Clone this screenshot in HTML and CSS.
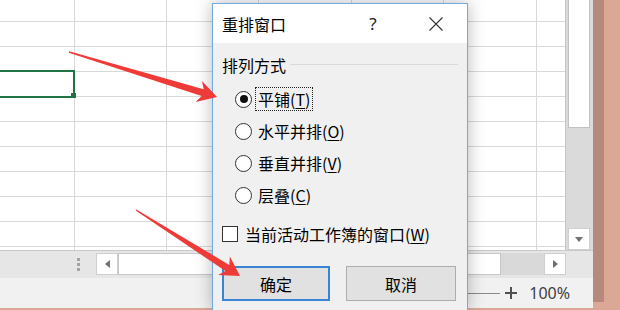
FILE: index.html
```html
<!DOCTYPE html>
<html lang="zh-CN">
<head>
<meta charset="utf-8">
<title>重排窗口</title>
<link rel="stylesheet" href="styles.css">
</head>
<body>
<div class="app">
  <div class="excel">
    <div class="top">
      <div class="grid">
        <div class="col w75"></div>
        <div class="col w92"></div>
        <div class="col w92"></div>
        <div class="col w93"></div>
        <div class="col w92"></div>
        <div class="col w93"></div>
        <div class="col last"></div>
        <div class="sel"><span class="handle"></span></div>
      </div>
      <div class="vscroll">
        <div class="vthumb"></div>
        <div class="vtrack"></div>
        <div class="sbtn down"><span class="tri-down"></span></div>
      </div>
    </div>
    <div class="hscroll">
      <div class="dots"><span></span><span></span><span></span></div>
      <div class="sbtn"><span class="tri-left"></span></div>
      <div class="hthumb"></div>
      <div class="htrack"></div>
      <div class="sbtn"><span class="tri-right"></span></div>
    </div>
    <div class="status">
      <span class="zoomline"></span>
      <svg class="plus" width="12" height="12" viewBox="0 0 12 12"><path d="M6 0v12M0 6h12" stroke="#505050" stroke-width="2" fill="none"/></svg>
      <span class="pct">100%</span>
    </div>
  </div>
  <div class="side"><div class="brown"></div></div>
</div>

<div class="dialog">
  <div class="titlebar">
    <span class="title">重排窗口</span>
    <span class="help">?</span>
    <span class="close"><svg width="14" height="14" viewBox="0 0 14 14"><path d="M0.5 0.5L13.5 13.5M13.5 0.5L0.5 13.5" stroke="#333" stroke-width="1.1" fill="none"/></svg></span>
  </div>
  <div class="body">
    <div class="group-head"><span>排列方式</span><span class="rule"></span></div>
    <div class="options">
      <div class="opt"><span class="radio checked"></span><span class="lbl focus">平铺(<u>T</u>)</span></div>
      <div class="opt"><span class="radio"></span><span class="lbl">水平并排(<u>O</u>)</span></div>
      <div class="opt"><span class="radio"></span><span class="lbl">垂直并排(<u>V</u>)</span></div>
      <div class="opt"><span class="radio"></span><span class="lbl">层叠(<u>C</u>)</span></div>
    </div>
    <div class="check"><span class="box"></span><span>当前活动工作簿的窗口(<u>W</u>)</span></div>
    <div class="buttons">
      <span class="btn default">确定</span>
      <span class="btn cancel">取消</span>
    </div>
  </div>
</div>

<svg class="arrows" width="620" height="310" viewBox="0 0 620 310">
  <g transform="translate(69 52) rotate(16.9)">
    <polygon points="0,-0.7 139.7,-3.5 135.7,-11 154.7,0 135.7,11 139.7,3.5 0,0.7" fill="#ef3b38"/>
  </g>
  <g transform="translate(136 210) rotate(32.4)">
    <polygon points="0,-0.7 108.2,-3.6 104.2,-11 123.2,0 104.2,11 108.2,3.6 0,0.7" fill="#ef3b38"/>
  </g>
</svg>
</body>
</html>
```
FILE: styles.css
```css
* { box-sizing: border-box; }
html, body { margin: 0; padding: 0; }
body {
  width: 620px;
  height: 310px;
  overflow: hidden;
  position: relative;
  background: #dca896;
  font-family: "Noto Sans CJK SC", "Noto Sans", sans-serif;
}

.app { display: flex; height: 310px; }

.excel {
  width: 593px;
  height: 308px;
  display: flex;
  flex-direction: column;
  background: #f1f1f1;
}

.top { display: flex; height: 250px; }

.grid {
  position: relative;
  display: flex;
  width: 566px;
  height: 250px;
  border-right: 1px solid #c6c6c6;
  background-color: #fff;
  background-image: linear-gradient(to bottom, transparent 21px, #d9d9d9 21px, #d9d9d9 22px, transparent 22px);
  background-size: 100% 25px;
}
.col { height: 100%; border-right: 1px solid #d9d9d9; flex: none; }
.w75 { width: 75px; }
.w92 { width: 92px; }
.w93 { width: 93px; }
.col.last { flex: 1; border-right: none; }

.sel {
  position: absolute;
  left: -2px;
  top: 70px;
  width: 77px;
  height: 28px;
  border: 2px solid #217346;
}
.handle {
  position: absolute;
  right: -3px;
  bottom: -2px;
  width: 5px;
  height: 5px;
  background: #217346;
}

.vscroll {
  width: 27px;
  height: 250px;
  background: #dadada;
  display: flex;
  flex-direction: column;
  padding-left: 2px;
}
.vthumb {
  width: 22px;
  height: 130px;
  margin-top: -2px;
  background: #fff;
  border: 1px solid #c2c2c2;
}
.vtrack { flex: 1; }

.sbtn {
  width: 22px;
  height: 22px;
  flex: none;
  background: #fff;
  border: 1px solid #cfcfcf;
  display: flex;
  align-items: center;
  justify-content: center;
}
.tri-down { width: 0; height: 0; border-left: 4px solid transparent; border-right: 4px solid transparent; border-top: 5px solid #707070; }
.tri-left { width: 0; height: 0; border-top: 4px solid transparent; border-bottom: 4px solid transparent; border-right: 5px solid #707070; }
.tri-right { width: 0; height: 0; border-top: 4px solid transparent; border-bottom: 4px solid transparent; border-left: 5px solid #707070; }

.hscroll {
  height: 28px;
  border-top: 1px solid #c8c8c8;
  background: #e6e6e6;
  display: flex;
  align-items: flex-start;
  padding-top: 2px;
  padding-right: 27px;
}
.dots {
  display: flex;
  flex-direction: column;
  gap: 2px;
  margin: 5px 16px 0 77px;
}
.dots span { width: 3px; height: 3px; background: #a3a3a3; }
.hthumb {
  width: 383px;
  height: 22px;
  background: #fff;
  border: 1px solid #c8c8c8;
}
.htrack { flex: 1; height: 22px; background: #d9d9d9; }

.status {
  height: 30px;
  display: flex;
  align-items: center;
  justify-content: flex-end;
  padding-right: 23px;
}
.zoomline { width: 150px; height: 1px; background: #8a8a8a; margin-right: 5px; }
.plus { margin-right: 12px; }
.pct { font-family: "Noto Sans", sans-serif; font-size: 16px; color: #404040; line-height: 20px; }

.side { width: 27px; }
.brown { width: 11px; height: 302px; background: #b7897a; }

/* dialog */
.dialog {
  position: absolute;
  left: 212px;
  top: 3px;
  width: 256px;
  height: 308px;
  border: 1px solid #72a9e0;
  border-bottom: none;
  background: #f0f0f0;
  box-shadow: 0 0 16px rgba(0, 0, 0, 0.28);
  color: #000;
}
.titlebar {
  height: 39px;
  background: #fff;
  display: flex;
  align-items: center;
  padding: 0 8px 0 9px;
}
.title { flex: 1; font-size: 16px; line-height: 20px; }
.help {
  width: 30px;
  text-align: center;
  font-family: "Noto Sans", sans-serif;
  font-size: 17px;
  color: #222;
  line-height: 20px;
}
.close {
  width: 46px;
  margin-left: 25px;
  display: flex;
  justify-content: center;
  align-items: center;
}
.close svg { display: block; }

.body { padding: 0 9px; font-size: 16px; }
.group-head {
  margin-top: 10px;
  height: 24px;
  display: flex;
  align-items: center;
  line-height: 20px;
}
.rule { flex: 1; height: 1px; background: #dadada; margin-left: 4px; margin-top: -1px; }

.options { margin-top: 6px; }
.opt {
  height: 32px;
  display: flex;
  align-items: center;
  padding-left: 13px;
}
.radio {
  width: 17px;
  height: 17px;
  border-radius: 50%;
  border: 1px solid #333;
  background: #fff;
  margin-right: 3px;
  display: flex;
  align-items: center;
  justify-content: center;
  flex: none;
}
.radio.checked::after {
  content: "";
  width: 8px;
  height: 8px;
  border-radius: 50%;
  background: #111;
}
.lbl {
  line-height: 20px;
  padding: 1px 2px;
  border: 1px dotted transparent;
}
.lbl.focus { border-color: #222; }
u { text-underline-offset: 2px; }

.check {
  margin-top: 11px;
  height: 24px;
  display: flex;
  align-items: center;
  line-height: 20px;
}
.box {
  width: 16px;
  height: 16px;
  border: 1px solid #333;
  background: #fff;
  margin-right: 7px;
  flex: none;
}

.buttons {
  margin-top: 20px;
  display: flex;
  gap: 16px;
}
.btn {
  height: 35px;
  background: #e1e1e1;
  display: flex;
  align-items: center;
  justify-content: center;
  font-size: 16px;
}
.btn.default { width: 108px; border: 2px solid #3a84d6; }
.btn.cancel { width: 110px; border: 1px solid #adadad; }

.arrows {
  position: absolute;
  left: 0;
  top: 0;
  pointer-events: none;
}
```
